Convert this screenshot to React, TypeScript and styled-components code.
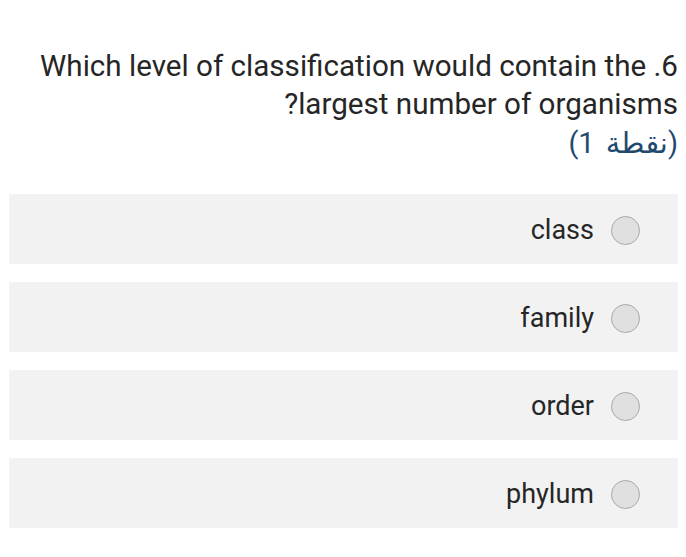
import React from "react";
import styled, { createGlobalStyle } from "styled-components";

const Global = createGlobalStyle`
  html, body { margin: 0; padding: 0; background: #ffffff; }
  body { font-family: Roboto, "DejaVu Sans", sans-serif; }
`;

const Page = styled.div`
  width: 686px;
  height: 557px;
  box-sizing: border-box;
  padding: 47px 8px 0 9px;
  direction: rtl;
  display: flex;
  flex-direction: column;
`;

const Question = styled.div`
  font-family: Roboto, "DejaVu Sans", sans-serif;
  font-size: 29.6px;
  line-height: 38px;
  color: #262626;
  text-align: right;
`;

const Points = styled.div`
  font-family: Roboto, "DejaVu Sans", sans-serif;
  font-size: 29px;
  line-height: 36px;
  word-spacing: 4px;
  color: #1f4a6e;
  text-align: right;
  margin-top: 2px;
`;

const Options = styled.div`
  display: flex;
  flex-direction: column;
  gap: 18px;
  margin-top: 33px;
`;

const Option = styled.label`
  height: 70px;
  background: #f2f2f2;
  display: flex;
  align-items: center;
  gap: 17px;
  padding-right: 38px;
`;

const Radio = styled.span`
  width: 27px;
  height: 27px;
  margin-top: 2px;
  border-radius: 50%;
  background: #e0e0e0;
  border: 1.5px solid #a9a9a9;
  flex: none;
`;

const Label = styled.span`
  font-family: Roboto, sans-serif;
  font-size: 27px;
  color: #262626;
  direction: ltr;
  margin-top: 2px;
`;

const options = ["class", "family", "order", "phylum"];

export default function App() {
  return (
    <>
      <Global />
      <Page>
        <Question>
          6. Which level of classification would contain the
          <br />
          largest number of organisms?
        </Question>
        <Points>(نقطة 1)</Points>
        <Options>
          {options.map((o) => (
            <Option key={o}>
              <Radio />
              <Label>{o}</Label>
            </Option>
          ))}
        </Options>
      </Page>
    </>
  );
}
